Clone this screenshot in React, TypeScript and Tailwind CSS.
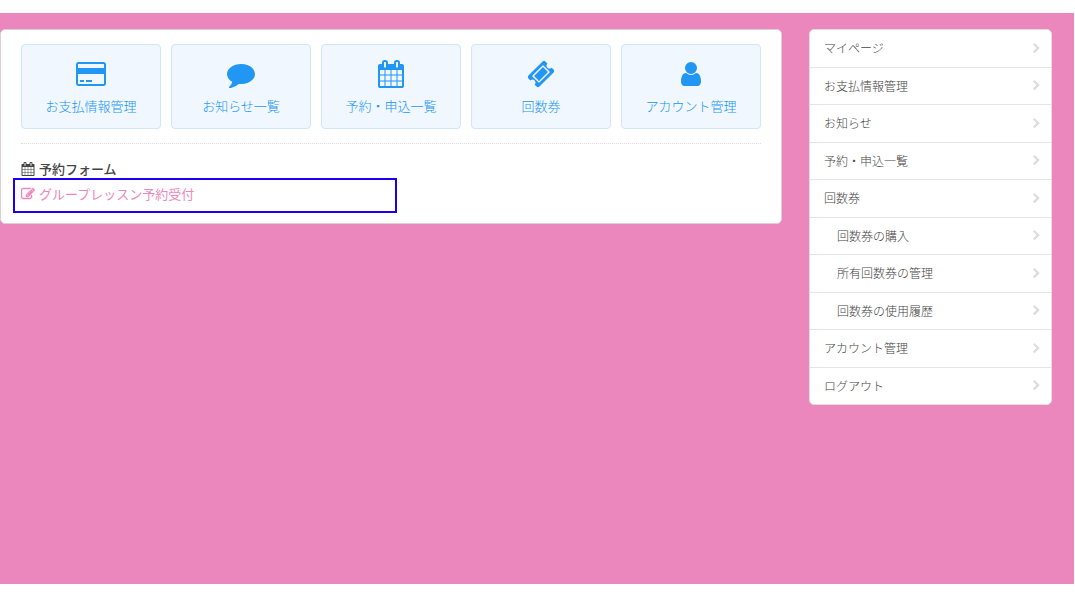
import { clsx } from 'clsx';

interface IIconProps {
  path: string;
  viewBox?: string;
  className?: string;
}

const CARD_PATH =
  'M1760 128q66 0 113 47t47 113v1216q0 66-47 113t-113 47h-1600q-66 0-113-47t-47-113v-1216q0-66 47-113t113-47h1600zm-1600 128q-13 0-22.5 9.5t-9.5 22.5v224h1664v-224q0-13-9.5-22.5t-22.5-9.5h-1600zm1600 1280q13 0 22.5-9.5t9.5-22.5v-608h-1664v608q0 13 9.5 22.5t22.5 9.5h1600zm-1504-128v-128h256v128h-256zm384 0v-128h384v128h-384z';
const COMMENT_PATH =
  'M1792 896q0 174-120 321.5t-326 233-450 85.5q-70 0-145-8-198 175-460 242-49 14-114 22-17 2-30.5-9t-17.5-29v-1q-3-4-.5-12t2-10 4.5-9.5l6-9 7-8.5 8-9q7-8 31-34.5t34.5-38 31-39.5 32.5-51 27-59 26-76q-157-89-247.5-220t-90.5-281q0-130 71-248.5t191-204.5 286-136.5 348-50.5q244 0 450 85.5t326 233 120 321.5z';
const CALENDAR_PATH =
  'M192 1664h288v-288h-288v288zm352 0h320v-288h-320v288zm-352-352h288v-320h-288v320zm352 0h320v-320h-320v320zm-352-384h288v-288h-288v288zm736 736h320v-288h-320v288zm-384-736h320v-288h-320v288zm768 736h288v-288h-288v288zm-384-352h320v-320h-320v320zm-352-864v-288q0-13-9.5-22.5t-22.5-9.5h-64q-13 0-22.5 9.5t-9.5 22.5v288q0 13 9.5 22.5t22.5 9.5h64q13 0 22.5-9.5t9.5-22.5zm736 864h288v-320h-288v320zm-384-384h320v-288h-320v288zm384 0h288v-288h-288v288zm32-480v-288q0-13-9.5-22.5t-22.5-9.5h-64q-13 0-22.5 9.5t-9.5 22.5v288q0 13 9.5 22.5t22.5 9.5h64q13 0 22.5-9.5t9.5-22.5zm384-64v1280q0 52-38 90t-90 38h-1408q-52 0-90-38t-38-90v-1280q0-52 38-90t90-38h128v-96q0-66 47-113t113-47h64q66 0 113 47t47 113v96h384v-96q0-66 47-113t113-47h64q66 0 113 47t47 113v96h128q52 0 90 38t38 90z';
const TICKET_PATH =
  'M1024 452l316 316-572 572-316-316zm-211 979l618-618q19-19 19-45t-19-45l-362-362q-18-18-45-18t-45 18l-618 618q-19 19-19 45t19 45l362 362q18 18 45 18t45-18zm889-637l-907 908q-37 37-90.5 37t-90.5-37l-126-126q56-56 56-136t-56-136-136-56-136 56l-125-126q-37-37-37-90.5t37-90.5l907-906q37-37 90.5-37t90.5 37l125 125q-56 56-56 136t56 136 136 56 136-56l126 125q37 37 37 90.5t-37 90.5z';
const USER_PATH =
  'M1536 1399q0 109-62.5 187t-150.5 78h-854q-88 0-150.5-78t-62.5-187q0-85 8.5-160.5t31.5-152 58.5-131 94-89 134.5-34.5q131 128 313 128t313-128q76 0 134.5 34.5t94 89 58.5 131 31.5 152 8.5 160.5zm-256-887q0 159-112.5 271.5t-271.5 112.5-271.5-112.5-112.5-271.5 112.5-271.5 271.5-112.5 271.5 112.5 112.5 271.5z';
const EDIT_PATH =
  'M888 1184l116-116-152-152-116 116v56h96v96h56zm440-720q-16-16-33 1l-350 350q-17 17-1 33t33-1l350-350q17-17 1-33zm80 594v190q0 119-84.5 203.5t-203.5 84.5h-832q-119 0-203.5-84.5t-84.5-203.5v-832q0-119 84.5-203.5t203.5-84.5h832q63 0 117 25 15 7 18 23 3 17-9 29l-49 49q-14 14-32 8-23-6-45-6h-832q-66 0-113 47t-47 113v832q0 66 47 113t113 47h832q66 0 113-47t47-113v-126q0-13 9-22l64-64q15-15 35-7t20 29zm-96-738l288 288-672 672h-288v-288zm444 132l-92 92-288-288 92-92q28-28 68-28t68 28l152 152q28 28 28 68t-28 68z';
const CHEVRON_PATH =
  'M1363 877l-742 742q-19 19-45 19t-45-19l-166-166q-19-19-19-45t19-45l531-531-531-531q-19-19-19-45t19-45l166-166q19-19 45-19t45 19l742 742q19 19 19 45t-19 45z';

function Icon({ path, viewBox = '0 0 1792 1792', className }: IIconProps) {
  return (
    <svg
      viewBox={viewBox}
      className={clsx('shrink-0 fill-current', className)}
      aria-hidden="true"
    >
      <path d={path} />
    </svg>
  );
}

const shortcuts = [
  {
    label: 'お支払情報管理',
    path: CARD_PATH,
    viewBox: '0 0 1920 1792',
    size: 'h-7 w-[30px]',
  },
  { label: 'お知らせ一覧', path: COMMENT_PATH, size: 'h-7 w-7' },
  {
    label: '予約・申込一覧',
    path: CALENDAR_PATH,
    viewBox: '64 0 1664 1792',
    size: 'h-7 w-7',
  },
  { label: '回数券', path: TICKET_PATH, size: 'h-7 w-7' },
  { label: 'アカウント管理', path: USER_PATH, size: 'h-7 w-7' },
];

const menu = [
  { label: 'マイページ' },
  { label: 'お支払情報管理' },
  { label: 'お知らせ' },
  { label: '予約・申込一覧' },
  { label: '回数券' },
  { label: '回数券の購入', child: true },
  { label: '所有回数券の管理', child: true },
  { label: '回数券の使用履歴', child: true },
  { label: 'アカウント管理' },
  { label: 'ログアウト' },
];

function Shortcuts() {
  return (
    <nav className="grid grid-cols-5 gap-[10px]">
      {shortcuts.map((item) => (
        <a
          key={item.label}
          href="#"
          className="flex flex-col items-center rounded border border-[#cfe6fd] bg-[#f0f7ff] pt-[15px] pb-3 text-[#2196f3]"
        >
          <Icon path={item.path} viewBox={item.viewBox} className={item.size} />
          <span className="mt-2 text-[13px] leading-5 font-light">
            {item.label}
          </span>
        </a>
      ))}
    </nav>
  );
}

function SideMenu() {
  return (
    <aside className="w-[243px] shrink-0">
      <ul className="flex min-h-[376px] flex-col divide-y divide-[#e5e5e5] overflow-hidden rounded-[5px] border border-[#e3dce0] bg-white">
        {menu.map((item) => (
          <li key={item.label} className="flex flex-1">
            <a
              href="#"
              className={clsx(
                'flex flex-1 items-center justify-between pr-[9px] text-xs font-light text-[#444]',
                item.child ? 'pl-[27px]' : 'pl-[14px]'
              )}
            >
              {item.label}
              <Icon
                path={CHEVRON_PATH}
                className="h-[11px] w-[11px] text-[#ddd]"
              />
            </a>
          </li>
        ))}
      </ul>
    </aside>
  );
}

function App() {
  return (
    <div className="min-h-screen bg-white py-3 pt-[13px] pr-px font-['Noto_Sans_CJK_JP',sans-serif]">
      <main className="flex min-h-[calc(100vh-25px)] items-start gap-[27px] bg-[#ec87be] pt-4 pr-[22px]">
        <section className="min-w-0 flex-1 rounded-[5px] border border-[#dccfd6] bg-white px-5 pt-[14px] pb-[10px]">
          <Shortcuts />
          <hr className="mt-[14px] border-t border-dotted border-[#ddd]" />
          <h2 className="mt-4 flex items-center gap-1 text-[13px] leading-[18px] font-medium text-[#444]">
            <Icon path={CALENDAR_PATH} className="h-[14px] w-[14px]" />
            予約フォーム
          </h2>
          <div className="-ml-2 w-96 max-w-full border-2 border-[#1a00ee] pt-1 pb-[7px] pl-[6px]">
            <a
              href="#"
              className="flex items-center gap-1 text-[13px] leading-5 text-[#ec87be]"
            >
              <Icon
                path={EDIT_PATH}
                className="h-[14px] w-[14px] stroke-current stroke-[60]"
              />
              グループレッスン予約受付
            </a>
          </div>
        </section>
        <SideMenu />
      </main>
    </div>
  );
}

export default App;
